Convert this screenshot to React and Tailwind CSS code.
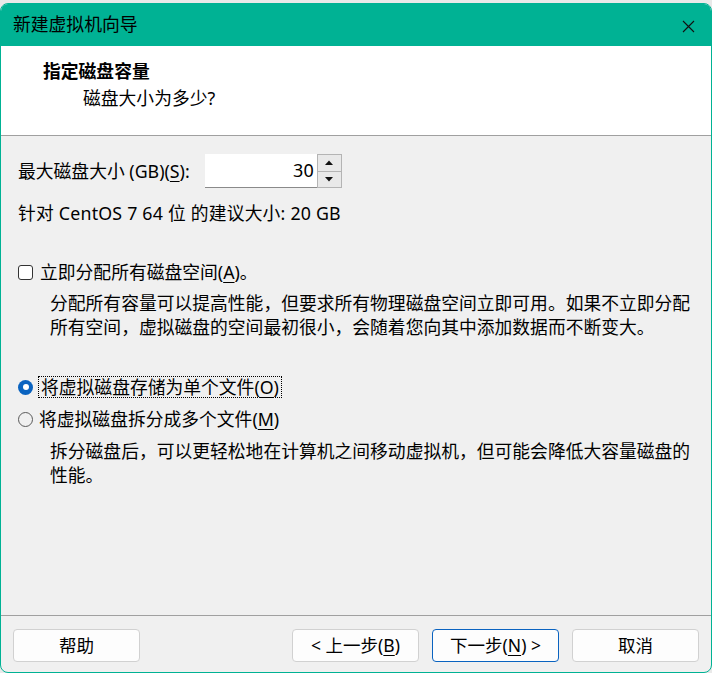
import React from "react";

function U({ children }) {
  return <span className="underline underline-offset-[3px] decoration-1">{children}</span>;
}

function Btn({ children, primary }) {
  return (
    <button
      className={
        primary
          ? "w-[127px] h-[33px] rounded-[4px] border border-[#0a63c0] bg-[#fdfdfd] text-[17.5px] text-black leading-none flex items-center justify-center"
          : "w-[127px] h-[33px] rounded-[4px] border border-[#d1d1d1] bg-[#fdfdfd] text-[17.5px] text-black leading-none flex items-center justify-center"
      }
    >
      {children}
    </button>
  );
}

export default function App() {
  return (
    <div className="w-[712px] h-[673px] bg-[#e9e9e9] pt-[3px] font-['Noto_Sans','Noto_Sans_CJK_SC',sans-serif] text-black overflow-hidden">
      <div className="h-[670px] flex flex-col border border-[#00b294] rounded-[8px] overflow-hidden bg-[#f0f0f0]">
        {/* Title bar */}
        <div className="h-[42px] shrink-0 bg-[#00b294] flex items-center justify-between pl-[12px] pr-[16px]">
          <span className="text-[17.8px] leading-none mt-[-1px]">新建虚拟机向导</span>
          <svg width="13" height="13" viewBox="0 0 13 13" className="mt-[2px]">
            <path d="M1 1 L12 12 M12 1 L1 12" stroke="#111" strokeWidth="1.1" />
          </svg>
        </div>

        {/* Header */}
        <div className="h-[90px] shrink-0 bg-white pl-[42px] pt-[13px] border-b border-[#a0a0a0]">
          <div className="text-[17.8px] leading-[24px] font-bold">指定磁盘容量</div>
          <div className="text-[17.8px] leading-[24px] mt-[3px] ml-[40px]">磁盘大小为多少?</div>
        </div>

        {/* Body */}
        <div className="flex-1 pl-[17px] pt-[18px] text-[17.8px] border-b border-[#a0a0a0]">
          <div className="flex items-center h-[34px]">
            <span className="whitespace-nowrap">
              最大磁盘大小 (GB)(<U>S</U>):
            </span>
            <div className="ml-[15px] flex h-[34px]">
              <div className="w-[112px] h-[34px] bg-white border-b border-[#8a8a8a] flex items-center justify-end pr-[3px] text-[18px]">
                30
              </div>
              <div className="w-[25px] h-[34px] border border-[#b4b4b4] flex flex-col bg-[#e9e9e9]">
                <div className="flex-1 border-b border-[#b4b4b4] flex items-center justify-center">
                  <svg width="8" height="5" viewBox="0 0 8 5">
                    <path d="M0 5 L4 0.5 L8 5 Z" fill="#111" />
                  </svg>
                </div>
                <div className="flex-1 flex items-center justify-center">
                  <svg width="8" height="5" viewBox="0 0 8 5">
                    <path d="M0 0 L4 4.5 L8 0 Z" fill="#111" />
                  </svg>
                </div>
              </div>
            </div>
          </div>

          <div className="mt-[13px] leading-[24px] whitespace-nowrap tracking-[0.2px]">
            针对 CentOS 7 64 位 的建议大小: 20 GB
          </div>

          <div className="mt-[35px] flex items-center h-[24px]">
            <div className="w-[15px] h-[15px] border border-[#333] rounded-[3px] bg-white shrink-0" />
            <span className="ml-[7px] whitespace-nowrap">
              立即分配所有磁盘空间(<U>A</U>)。
            </span>
          </div>

          <div className="mt-[8px] ml-[32px] leading-[23.5px] whitespace-nowrap">
            分配所有容量可以提高性能，但要求所有物理磁盘空间立即可用。如果不立即分配
            <br />
            所有空间，虚拟磁盘的空间最初很小，会随着您向其中添加数据而不断变大。
          </div>

          <div className="mt-[36px] flex items-center h-[24px]">
            <div className="w-[15px] h-[15px] rounded-full bg-[#0a63c0] flex items-center justify-center shrink-0">
              <div className="w-[6px] h-[6px] rounded-full bg-white" />
            </div>
            <span className="ml-[5px] border border-dotted border-black px-[2px] leading-[20px] whitespace-nowrap">
              将虚拟磁盘存储为单个文件(<U>O</U>)
            </span>
          </div>

          <div className="mt-[8px] flex items-center h-[24px]">
            <div className="w-[15px] h-[15px] rounded-full border border-[#5a5a5a] shrink-0" />
            <span className="ml-[6px] whitespace-nowrap">
              将虚拟磁盘拆分成多个文件(<U>M</U>)
            </span>
          </div>

          <div className="mt-[8px] ml-[32px] leading-[24px] whitespace-nowrap">
            拆分磁盘后，可以更轻松地在计算机之间移动虚拟机，但可能会降低大容量磁盘的
            <br />
            性能。
          </div>
        </div>

        {/* Footer */}
        <div className="h-[56px] shrink-0 flex items-start pt-[13px] pl-[12px] pr-[12px]">
          <Btn>帮助</Btn>
          <div className="flex-1" />
          <div className="flex gap-[13px]">
            <Btn>
              &lt; 上一步(<U>B</U>)
            </Btn>
            <Btn primary>
              下一步(<U>N</U>) &gt;
            </Btn>
            <Btn>取消</Btn>
          </div>
        </div>
      </div>
    </div>
  );
}
